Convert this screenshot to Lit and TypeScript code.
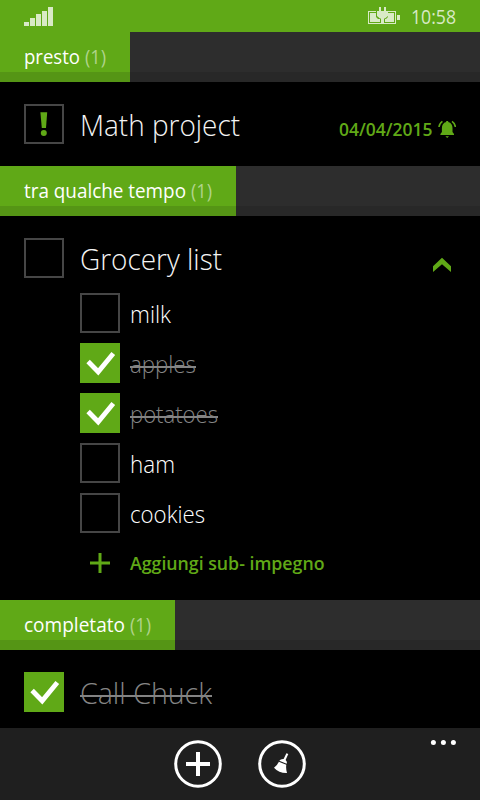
import { LitElement, html, svg, css, nothing } from "lit";
import { customElement, property } from "lit/decorators.js";

/** A single line of text set to an exact advance width on a given baseline. */
@customElement("text-line")
class TextLine extends LitElement {
  @property() text = "";
  @property({ type: Number }) width = 0;
  @property({ type: Number }) height = 40;
  @property({ type: Number }) baseline = 30;
  @property({ type: Number }) strike = 0;

  static styles = css`
    :host { display: block; flex: none; }
    svg { display: block; overflow: visible; }
    text { fill: currentColor; white-space: pre; }
    .strike { fill: #838383; }
  `;

  render() {
    return html`<svg width=${this.width} height=${this.height}>
      <text x="0" y=${this.baseline} textLength=${this.width} lengthAdjust="spacingAndGlyphs">${this.text}</text>
      ${this.strike ? svg`<rect class="strike" x="0" y=${this.strike} width=${this.width} height="2"></rect>` : nothing}
    </svg>`;
  }
}

@customElement("check-box")
class CheckBox extends LitElement {
  @property({ type: Boolean, reflect: true }) checked = false;
  @property({ type: Boolean }) urgent = false;

  static styles = css`
    :host { display: block; box-sizing: border-box; width: 40px; height: 40px; flex: none; border: 2px solid #464646; }
    :host([checked]) { background: #60a917; border-color: #60a917; }
    svg { display: block; }
    .tick { fill: none; stroke: #fff; stroke-width: 4.8; }
    .mark { fill: #60a917; }
  `;

  render() {
    return html`<svg width="36" height="36" viewBox="2 2 36 36">
      ${this.checked ? svg`<path class="tick" d="M8.1 18.5 L18.2 28.8 L33.3 10.5"></path>` : nothing}
      ${this.urgent ? svg`<path class="mark" d="M16.4 8.2 H23.2 L22 24 H17.8 Z"></path><circle class="mark" cx="19.8" cy="29" r="3"></circle>` : nothing}
    </svg>`;
  }
}

@customElement("group-header")
class GroupHeader extends LitElement {
  @property() label = "";
  @property() count = "";
  @property({ type: Number }) labelWidth = 0;

  static styles = css`
    :host { display: flex; flex: none; height: 50px; background: linear-gradient(#2d2d2d 40px, #282828 40px); }
    .tab { display: flex; gap: 5px; padding: 0 24px; background: linear-gradient(#60a917 40px, #559515 40px); font-size: 19.5px; color: #fff; }
    .count { color: #b0d48b; }
  `;

  render() {
    return html`<div class="tab">
      <text-line .text=${this.label} .width=${this.labelWidth} .height=${50} .baseline=${32}></text-line>
      <text-line class="count" .text=${`(${this.count})`} .width=${21} .height=${50} .baseline=${32}></text-line>
    </div>`;
  }
}

const subtasks = [
  { name: "milk", width: 41, done: false },
  { name: "apples", width: 66, done: true },
  { name: "potatoes", width: 88, done: true },
  { name: "ham", width: 45, done: false },
  { name: "cookies", width: 75, done: false },
];

@customElement("app-root")
class AppRoot extends LitElement {
  static styles = css`
    :host { display: flex; flex-direction: column; width: 480px; height: 800px; overflow: hidden; background: #000; color: #fff; font-family: "Open Sans", "Noto Sans", sans-serif; }
    svg { display: block; flex: none; }
    .status, .task, .subs, .bar { flex: none; box-sizing: border-box; }
    .status { display: flex; height: 32px; background: #60a917; color: #d9eac6; fill: #d9eac6; padding: 0 24px; font-size: 20px; }
    .space, .grow { flex: 1; }
    .clock { margin-left: 11px; font-weight: 400; }
    .task { display: flex; padding: 22px 24px 0; gap: 16px; }
    .first { height: 84px; }
    .second { height: 72px; }
    .last { height: 78px; }
    .title { font-size: 29.5px; font-weight: 300; color: #f4f4f4; }
    .date { font-size: 17.3px; font-weight: 600; color: #60a917; }
    .bell { margin-left: -10px; }
    .green { fill: #60a917; }
    .ring { fill: none; stroke: #60a917; stroke-width: 1.6; }
    .subs { height: 312px; padding: 5px 24px 0 80px; display: flex; flex-direction: column; gap: 10px; }
    .sub { display: flex; gap: 10px; font-size: 23px; font-weight: 300; }
    .sub.done, .title.done { color: #858585; }
    .add { display: flex; gap: 10px; font-size: 17.5px; font-weight: 600; color: #60a917; }
    .bar { display: flex; height: 72px; background: #1f1f1f; padding: 12px 24px 0 174px; }
    .brush { margin-left: 36px; }
    .outline { fill: none; stroke: #fff; stroke-width: 3; }
    .white { fill: #fff; }
  `;

  render() {
    return html`
      <div class="status">
        <svg width="30" height="32"><path d="M0 22h5v4H0zM6 18h5v8H6zM12 14h5v12h-5zM18 11h5v15h-5zM24 7h5v19h-5z"></path></svg>
        <div class="space"></div>
        <svg width="32" height="32">
          <path fill-rule="evenodd" d="M0 11H8V12H1V23H13V24H0ZM20 11H28V24H16V23H27V12H20ZM29 15h3v5h-3z"></path>
          <path d="M2 13H8V17L10 19H12V22H2ZM20 13H26V22H17V19H18L20 17ZM11 7h2v4h-2zM16 7h2v4h-2zM9 11H20V16L17 18.5H16V24H13V18.5H12L9 16Z"></path>
        </svg>
        <text-line class="clock" .text=${"10:58"} .width=${45} .height=${32} .baseline=${24}></text-line>
      </div>

      <group-header label="presto" count="1" .labelWidth=${56}></group-header>
      <div class="task first">
        <check-box urgent></check-box>
        <text-line class="title" .text=${"Math project"} .width=${160} .baseline=${32}></text-line>
        <div class="grow"></div>
        <text-line class="date" .text=${"04/04/2015"} .width=${93.5} .baseline=${32}></text-line>
        <svg class="bell" width="18" height="40">
          <path class="green" d="M8.2 18V17h2v1C13.2 18.7 14.5 21 14.5 24V28L16 30V31H2.4V30L3.9 28V24C3.9 21 5.2 18.7 8.2 18ZM7.4 32.2h3.6L9.2 34Z"></path>
          <path class="ring" d="M4.4 17.4Q1.4 19.4 1 23M14 17.4Q17 19.4 17.4 23"></path>
        </svg>
      </div>

      <group-header label="tra qualche tempo" count="1" .labelWidth=${162}></group-header>
      <div class="task second">
        <check-box></check-box>
        <text-line class="title" .text=${"Grocery list"} .width=${142} .baseline=${32}></text-line>
        <div class="grow"></div>
        <svg width="24" height="40"><path class="green" d="M1 28.3L10 19.8L19 28.3V34L10 26.2L1 34Z"></path></svg>
      </div>
      <div class="subs">
        ${subtasks.map((s) => html`<div class="sub ${s.done ? "done" : ""}">
          <check-box ?checked=${s.done}></check-box>
          <text-line .text=${s.name} .width=${s.width} .baseline=${30} .strike=${s.done ? 23 : 0}></text-line>
        </div>`)}
        <div class="add">
          <svg width="40" height="40"><path class="green" d="M10 18.5h8.5V10h3v8.5H30v3h-8.5V30h-3V21.5H10z"></path></svg>
          <text-line .text=${"Aggiungi sub- impegno"} .width=${194.5} .baseline=${27}></text-line>
        </div>
      </div>

      <group-header label="completato" count="1" .labelWidth=${101}></group-header>
      <div class="task last">
        <check-box checked></check-box>
        <text-line class="title done" .text=${"Call Chuck"} .width=${132} .baseline=${32} .strike=${23}></text-line>
      </div>

      <div class="bar">
        <svg width="48" height="48"><circle class="outline" cx="24" cy="24" r="22.3"></circle><path class="white" d="M12 22h10V12h4v10h10v4H26v10h-4V26H12z"></path></svg>
        <svg class="brush" width="48" height="48">
          <circle class="outline" cx="24" cy="24" r="22.3"></circle>
          <path class="white" d="M28.4 13.2L30.3 14L27.6 19.9Q29.4 21.6 28.7 23.8L21.3 20.8Q22.6 18.9 25.6 19.1ZM20.8 21.8L28.3 24.8Q27.7 28.6 29 33Q21 33.3 16 27.7Q19.3 25.4 20.8 21.8Z"></path>
        </svg>
        <div class="grow"></div>
        <svg width="26" height="30"><circle class="white" cx="3.4" cy="2.5" r="2.5"></circle><circle class="white" cx="13.4" cy="2.5" r="2.5"></circle><circle class="white" cx="23.4" cy="2.5" r="2.5"></circle></svg>
      </div>
    `;
  }
}
